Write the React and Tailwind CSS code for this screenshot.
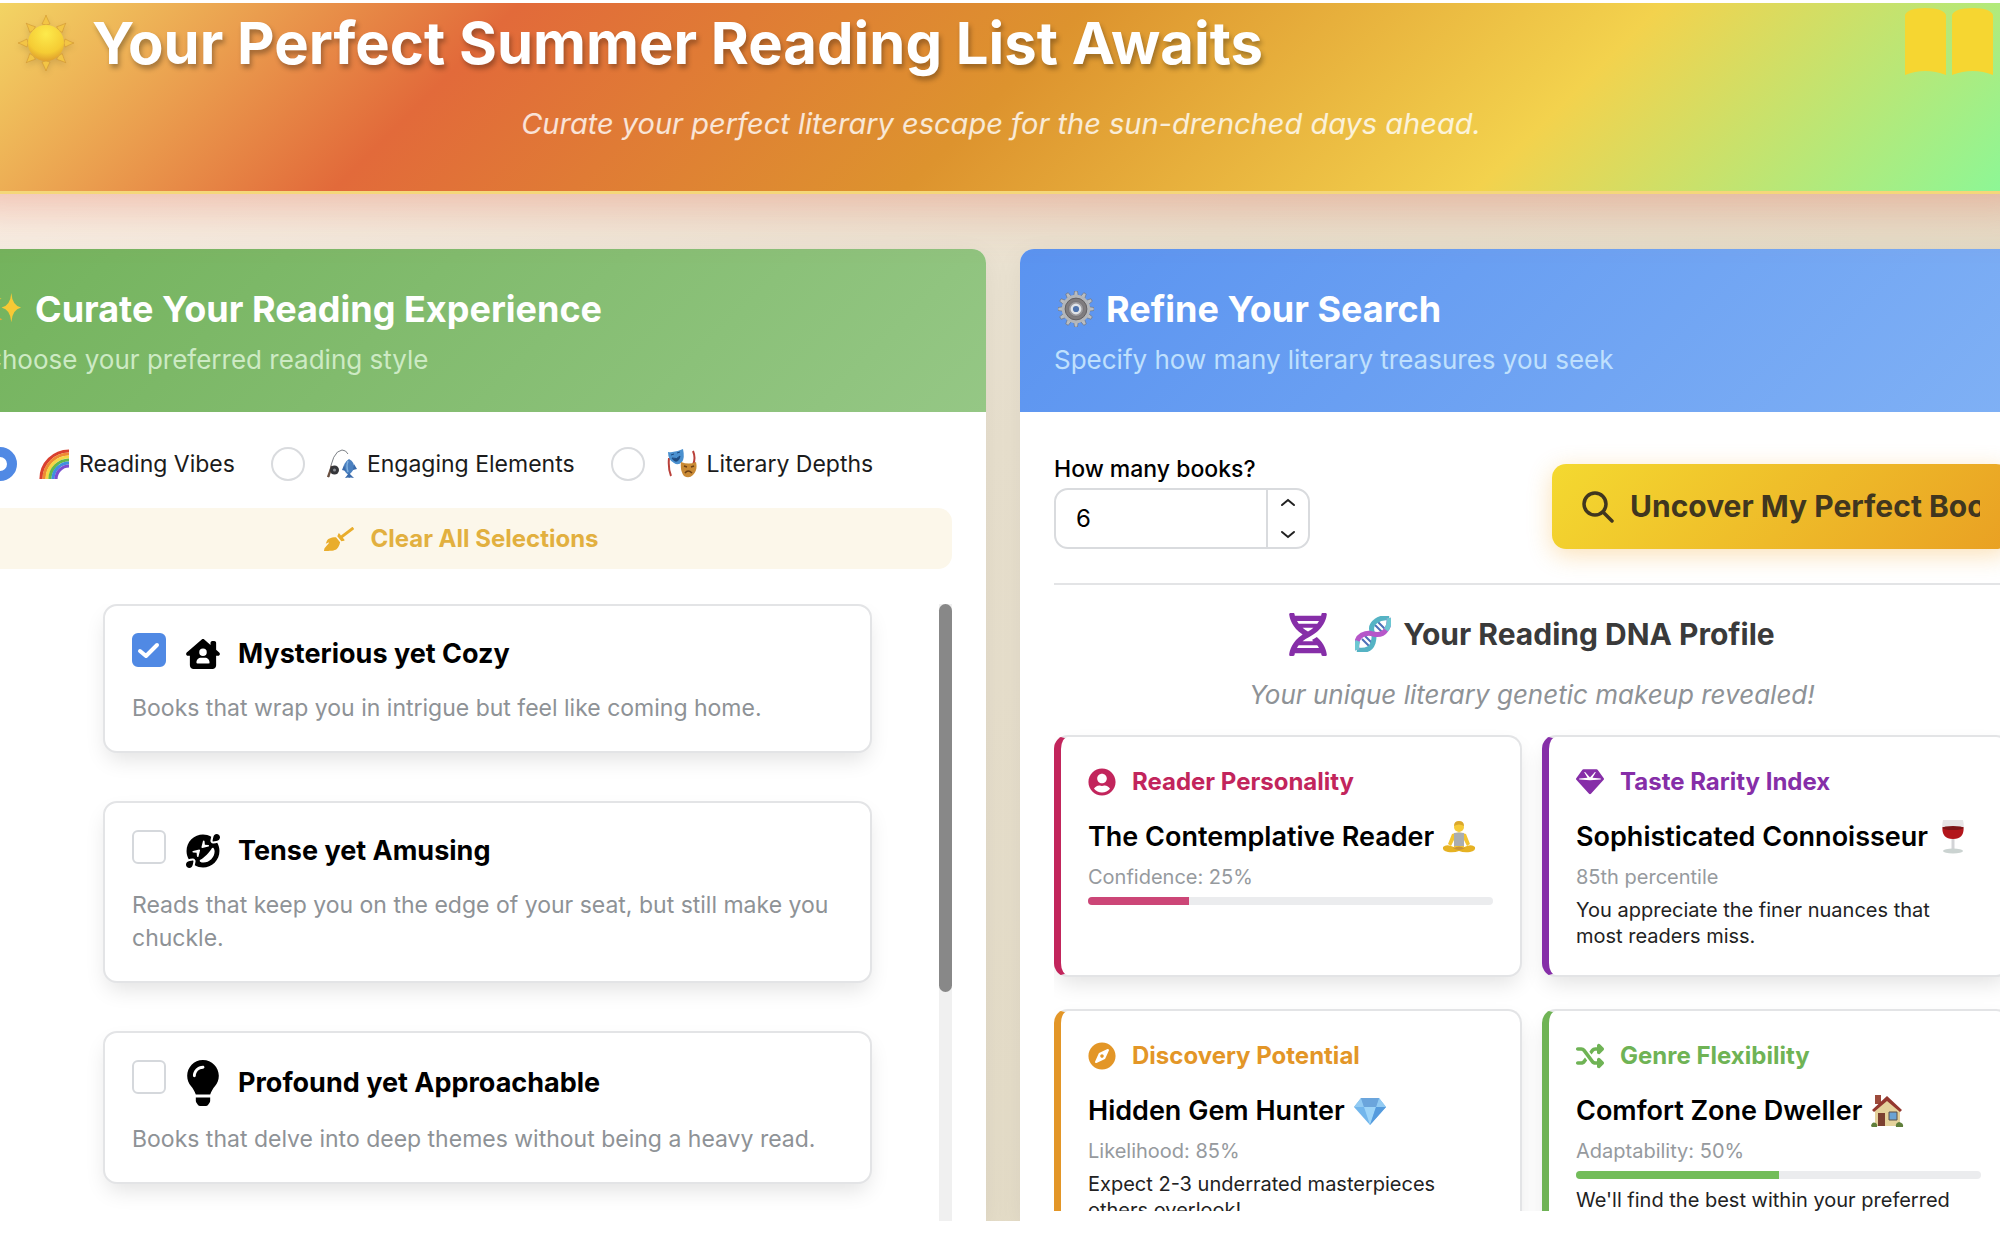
import React, { useState } from "react";
import {
  FaBroom,
  FaCompass,
  FaDna,
  FaGrinSquintTears,
  FaLightbulb,
  FaUserCircle,
} from "react-icons/fa";
import { FaGem, FaHouseChimneyUser, FaShuffle } from "react-icons/fa6";

function SunIcon() {
  const rays = [0, 45, 90, 135, 180, 225, 270, 315];
  return (
    <svg viewBox="0 0 56 56" className="h-14 w-14 shrink-0 drop-shadow-md" aria-hidden="true">
      <defs>
        <radialGradient id="sunFill" cx="50%" cy="25%" r="75%">
          <stop offset="0" stopColor="#fdea4c" />
          <stop offset="0.7" stopColor="#f5cc34" />
          <stop offset="1" stopColor="#e0a02c" />
        </radialGradient>
      </defs>
      {rays.map((deg) => (
        <path key={deg} d="M28 0c1 3 2 5 4 9q-4 2-8 0c2-4 3-6 4-9z" fill="#f3c545" stroke="#c98a2b" strokeWidth="0.5" transform={`rotate(${deg} 28 28)`} />
      ))}
      <circle cx="28" cy="28" r="18" fill="url(#sunFill)" />
    </svg>
  );
}

function BookIcon() {
  return (
    <svg viewBox="0 0 88 68" className="h-[68px] w-[88px]" fill="#f6d631" aria-hidden="true">
      <path d="M0 8Q3 1 20 1Q38 1 41 8V68Q20 60 0 68z" />
      <path d="M47 8Q50 1 68 1Q85 1 88 8V68Q68 60 47 68z" />
    </svg>
  );
}

function SparklesIcon() {
  return (
    <svg viewBox="0 0 37 37" className="h-9 w-9 shrink-0" fill="#f7c935" aria-hidden="true">
      <path d="M25 2q1 13 10 15q-9 2-10 15q-1-13-10-15q9-2 10-15z" />
      <path d="M9 1q1 6 6 7q-5 1-6 7q-1-6-6-7q5-1 6-7z" />
      <path d="M10 22q1 6 6 7q-5 1-6 7q-1-6-6-7q5-1 6-7z" fill="#eda937" />
    </svg>
  );
}

function GearIcon() {
  const teeth = [0, 30, 60, 90, 120, 150, 180, 210, 240, 270, 300, 330];
  return (
    <svg viewBox="0 0 38 38" className="h-9 w-9 shrink-0" aria-hidden="true">
      {teeth.map((deg) => (
        <path key={deg} d="M16.500 6l1-6h3l1 6z" fill="#b9bdc2" stroke="#6d6f75" strokeWidth="0.6" transform={`rotate(${deg} 19 19)`} />
      ))}
      <circle cx="19" cy="19" r="15" fill="#b3b6ba" />
      <circle cx="19" cy="19" r="11.500" fill="#7f7c7e" stroke="#5f5d60" />
      <circle cx="19" cy="19" r="8" fill="#9b999c" stroke="#77757a" />
      <circle cx="19" cy="19" r="4.500" fill="#4f74ad" stroke="#dfe3e8" strokeWidth="2.500" />
    </svg>
  );
}

function RainbowIcon() {
  const bands = [
    [28, "#d9402f"],
    [25, "#ee8b33"],
    [22, "#f5d645"],
    [19, "#62b84b"],
    [16, "#3f8fe0"],
    [13, "#7a4fd0"],
  ];
  return (
    <svg viewBox="0 0 30 30" className="h-[30px] w-[30px] shrink-0" fill="none" aria-hidden="true">
      {bands.map(([r, color]) => (
        <path key={r} d={`M${30 - r} 30A${r} ${r} 0 0 1 30 ${30 - r}`} stroke={color} strokeWidth="3.200" />
      ))}
    </svg>
  );
}

function FishingIcon() {
  return (
    <svg viewBox="0 0 30 30" className="h-[30px] w-[30px] shrink-0" fill="none" aria-hidden="true">
      <path d="M2 28Q5 2 15 1Q19 1 21 5" stroke="#7b7f85" strokeWidth="1" />
      <path d="M1 28L5 17" stroke="#6a5040" strokeWidth="2.200" />
      <circle cx="7.500" cy="21" r="4.500" fill="#35363a" />
      <circle cx="7.500" cy="21" r="1.500" fill="#8b8e94" />
      <path d="M22 10q6 3 5 10q-2 3-5 6q-4-2-5-6q-1-6 5-10z" fill="#4a80c0" />
      <path d="M17 16l-2 5l4 1zM27 15l3 5l-4 1zM22 24l-4 5q4-1 4 0q1-1 5 0z" fill="#3a6aaa" />
      <path d="M21 12q-2 5 0 11" stroke="#80b0e0" strokeWidth="1.500" />
    </svg>
  );
}

function MasksIcon() {
  return (
    <svg viewBox="0 0 30 30" className="h-[30px] w-[30px] shrink-0" fill="none" aria-hidden="true">
      <path d="M2 9Q1 20 4 27M26 2q3 7 0 14" stroke="#b9403a" strokeWidth="2" />
      <path d="M1 3q7 1 15-3q2 9-1 13q-4 4-8 1Q1 11 1 3z" fill="#4a90cf" />
      <path d="M4 6l3-1M10 4l3-1M5 9q5 2 8-2q-1 6-5 5q-2-1-3-3z" stroke="#1e4a80" fill="#1e4a80" />
      <path d="M14 13q8 3 15 0q2 8-3 13q-4 4-9 1q-4-5-3-14z" fill="#c98a35" />
      <path d="M17 17l3 1M24 18l3-1M18 24q3-4 7 0" stroke="#6b3f14" strokeWidth="1.500" />
    </svg>
  );
}

// two crossing strands, drawn as twisted ribbons with rungs in the loops
function HelixIcon() {
  return (
    <svg viewBox="0 0 36 36" className="h-9 w-9 shrink-0" fill="none" aria-hidden="true">
      <path d="M7 23l7 7M10 20l7 7M20 9l7 7M23 6l7 7" stroke="#4d70b8" strokeWidth="2" />
      <path d="M2 34Q15 36 18 27Q20 20 18 18Q14 10 21 5Q26 1 34 2" stroke="#55b3c4" strokeWidth="5" />
      <path d="M2 34Q0 23 7 19Q13 16 18 18Q27 20 31 14Q35 9 34 2" stroke="#b657c9" strokeWidth="5" />
      <path d="M34 2Q35 9 31 14M2 34Q1 29 3 25" stroke="#6cc7d2" strokeWidth="5" />
    </svg>
  );
}

function MeditateIcon() {
  return (
    <svg viewBox="0 0 34 32" className="h-8 w-[34px] shrink-0" aria-hidden="true">
      <path d="M10 13q7-3 14 0l4 10l-3 2l-3-6v7H12v-7l-3 6l-3-2z" fill="#f3c431" />
      <path d="M12 12q5-1 10 0v13H12z" fill="#a9adb1" />
      <path d="M1 26q3-3 8-1q4 2 8 2q4 0 8-2q5-2 8 1q1 4-5 5q-6 1-11-1q-5 2-11 1q-6-1-5-5z" fill="#e6b223" />
      <path d="M11 27q6-3 12 0q-6 4-12 0z" fill="#c8953a" />
      <circle cx="17" cy="6" r="5" fill="#f6cb38" />
      <path d="M12 5q0-5 5-5t5 5q-5-3-10 0z" fill="#dba82b" />
    </svg>
  );
}

function WineIcon() {
  return (
    <svg viewBox="0 0 34 34" className="h-[34px] w-[34px] shrink-0" aria-hidden="true">
      <path d="M7 0h20q2 8-1 14q-3 5-9 5t-9-5Q5 8 7 0z" fill="#e7e5e6" />
      <path d="M6.500 7h21q1 12-10.500 12T6.500 7z" fill="#b3161c" />
      <ellipse cx="17" cy="8" rx="10.500" ry="2" fill="#7d1517" />
      <path d="M15.500 19h3v11h-3z" fill="#d3d4d7" />
      <ellipse cx="17" cy="31" rx="10" ry="2.500" fill="#cbd3d1" />
    </svg>
  );
}

function DiamondIcon() {
  return (
    <svg viewBox="0 0 34 28" className="h-7 w-[34px] shrink-0" aria-hidden="true">
      <path d="M8 1h18l7 9l-16 18L1 10z" fill="#72b6ec" />
      <path d="M8 1l3 9H1zM26 1l-3 9h10z" fill="#92cbf3" />
      <path d="M8 1h18l-3 9H11z" fill="#6ba5dc" />
      <path d="M11 10h12l-6 18z" fill="#9cd4f8" />
      <path d="M23 10h10L17 28z" fill="#559bdd" />
    </svg>
  );
}

function HouseIcon() {
  return (
    <svg viewBox="0 0 34 33" className="h-[33px] w-[34px] shrink-0" aria-hidden="true">
      <path d="M5 0h6v9H5z" fill="#9c4a3b" />
      <path d="M5 14L18 4l12 10v17H5z" fill="#e5d29c" />
      <path d="M2 15L17 1l15 14l-2 2L17 6L4 17z" fill="#94382f" />
      <path d="M8 18h7v13H8z" fill="#7c4030" />
      <path d="M19 17h8v8h-8z" fill="#6aa3d4" stroke="#5c5148" />
      <path d="M1 31q1-5 5-3q2 2 1 4H2zM26 32q-1-4 3-5q5 1 4 5z" fill="#5f7f3b" />
    </svg>
  );
}

function SearchIcon() {
  return (
    <svg viewBox="0 0 32 32" className="h-8 w-8 shrink-0" fill="none" stroke="#40361f" strokeWidth="3.500" strokeLinecap="round" aria-hidden="true">
      <circle cx="13" cy="13" r="11" />
      <path d="M21 21l9 9" />
    </svg>
  );
}

function Chevron({ up }) {
  return (
    <svg viewBox="0 0 16 9" className="h-[9px] w-4" fill="none" stroke="#222" strokeWidth="2" strokeLinecap="round" aria-hidden="true">
      <path d={up ? "M2 7l6-5l6 5" : "M2 2l6 5l6-5"} />
    </svg>
  );
}

const categories = [
  { id: "vibes", label: "Reading Vibes", icon: <RainbowIcon /> },
  { id: "elements", label: "Engaging Elements", icon: <FishingIcon /> },
  { id: "depths", label: "Literary Depths", icon: <MasksIcon /> },
];

const vibes = [
  {
    id: "cozy",
    title: "Mysterious yet Cozy",
    text: "Books that wrap you in intrigue but feel like coming home.",
    icon: <FaHouseChimneyUser className="h-[30px] w-[34px]" />,
  },
  {
    id: "tense",
    title: "Tense yet Amusing",
    text: "Reads that keep you on the edge of your seat, but still make you chuckle.",
    icon: <FaGrinSquintTears className="h-[34px] w-[34px]" />,
  },
  {
    id: "profound",
    title: "Profound yet Approachable",
    text: "Books that delve into deep themes without being a heavy read.",
    icon: <FaLightbulb className="h-[46px] w-[34px]" />,
  },
];

const traits = [
  {
    label: "Reader Personality",
    icon: <FaUserCircle />,
    color: "text-[#c2255c]",
    border: "border-l-[#c2255c]",
    name: "The Contemplative Reader",
    emoji: <MeditateIcon />,
    stat: "Confidence: 25%",
    bar: 25,
    fill: "bg-[#cc4677]",
  },
  {
    label: "Taste Rarity Index",
    icon: <FaGem />,
    color: "text-[#862ea8]",
    border: "border-l-[#862ea8]",
    name: "Sophisticated Connoisseur",
    emoji: <WineIcon />,
    stat: "85th percentile",
    text: "You appreciate the finer nuances that most readers miss.",
  },
  {
    label: "Discovery Potential",
    icon: <FaCompass />,
    color: "text-[#e39627]",
    border: "border-l-[#e39627]",
    name: "Hidden Gem Hunter",
    emoji: <DiamondIcon />,
    stat: "Likelihood: 85%",
    text: "Expect 2-3 underrated masterpieces others overlook!",
  },
  {
    label: "Genre Flexibility",
    icon: <FaShuffle />,
    color: "text-[#6fb355]",
    border: "border-l-[#6fb355]",
    name: "Comfort Zone Dweller",
    emoji: <HouseIcon />,
    stat: "Adaptability: 50%",
    bar: 50,
    fill: "bg-[#73bd5a]",
    text: "We'll find the best within your preferred genres.",
  },
];

function VibeCard({ vibe, checked, onToggle }) {
  return (
    <div className="rounded-[14px] border-2 border-[#e3e4e6] bg-white px-[27px] pt-[27px] pb-[26px] shadow-[0_10px_22px_-4px_rgba(0,0,0,0.12)]">
      <label htmlFor={vibe.id} className="flex cursor-pointer items-start">
        <span className="grid shrink-0">
          <input
            id={vibe.id}
            type="checkbox"
            checked={checked}
            onChange={onToggle}
            className="col-start-1 row-start-1 h-[34px] w-[34px] appearance-none rounded-md border-2 border-[#d5d8dc] bg-white checked:border-[#5089e4] checked:bg-[#5089e4]"
          />
          {checked && (
            <svg viewBox="0 0 34 34" className="pointer-events-none col-start-1 row-start-1 h-[34px] w-[34px]" fill="none" stroke="white" strokeWidth="4" strokeLinecap="round" strokeLinejoin="round">
              <path d="M8 18l6 5l11-11" />
            </svg>
          )}
        </span>
        <span className="ml-5 flex min-h-[42px] items-center gap-[18px] text-black">
          {vibe.icon}
          <span className="text-[27px] leading-[42px] font-bold">{vibe.title}</span>
        </span>
      </label>
      <p className="mt-[17px] text-[23px] leading-[33px] text-[#8e9296]">{vibe.text}</p>
    </div>
  );
}

function TraitCard({ trait }) {
  return (
    <div className={`rounded-[14px] border-2 border-l-[7px] border-[#e3e4e6] bg-white px-[27px] pt-[27px] pb-[26px] shadow-[0_10px_22px_-4px_rgba(0,0,0,0.12)] ${trait.border}`}>
      <h4 className={`flex items-center gap-4 text-2xl leading-9 font-bold ${trait.color}`}>
        <span className="text-[28px]">{trait.icon}</span>
        {trait.label}
      </h4>
      <p className="mt-[17px] flex items-center gap-2 text-[27px] leading-10 font-semibold text-black">
        {trait.name} {trait.emoji}
      </p>
      <p className="mt-1 text-xl leading-8 text-[#969a9e]">{trait.stat}</p>
      {trait.bar && (
        <div className="mt-1 mb-2 h-2 overflow-hidden rounded-full bg-[#ebecee]">
          <div className={`h-full ${trait.fill}`} style={{ width: `${trait.bar}%` }}></div>
        </div>
      )}
      {trait.text && <p className="mt-1 text-xl leading-[26px] text-[#222]">{trait.text}</p>}
    </div>
  );
}

export default function App() {
  const [category, setCategory] = useState("vibes");
  const [selected, setSelected] = useState(["cozy"]);
  const [count, setCount] = useState(6);

  const toggleVibe = (id) => {
    setSelected((prev) => (prev.includes(id) ? prev.filter((v) => v !== id) : [...prev, id]));
  };

  return (
    <div className="h-screen overflow-hidden bg-white pt-[3px] pb-[15px] font-[Inter,sans-serif]">
      <div className="-ml-[51px] flex h-full w-[calc(100%+95px)] flex-col overflow-hidden bg-[linear-gradient(135deg,#fbf3ea_0%,#e8e0ce_45%,#e0d8c0_100%)]">
        <header className="relative shrink-0 border-b-[3px] border-[#f5d77a] bg-[linear-gradient(135deg,#f3d564_2%,#e26a3a_25%,#dd932e_50%,#f3d24d_75%,#84fa9c_100%)] bg-origin-border pr-[60px] pb-[43px] pl-[69px] shadow-[0_8px_50px_rgba(231,111,81,0.45)]">
          <h1 className="flex items-center gap-[18px] text-[58px] leading-[80px] font-bold whitespace-nowrap text-white [text-shadow:2px_4px_5px_rgba(0,0,0,0.3)]">
            <SunIcon />
            Your Perfect Summer Reading List Awaits
          </h1>
          <p className="pt-[17px] text-center text-[29px] leading-[48px] text-white/80 italic">
            Curate your perfect literary escape for the sun-drenched days ahead.
          </p>
          <div className="absolute top-1 right-[51px]">
            <BookIcon />
          </div>
        </header>

        <main className="mt-[55px] grid min-h-0 flex-1 grid-cols-[1037fr_1024fr] gap-[34px]">
          <section className="flex min-h-0 flex-col rounded-t-[14px] bg-white shadow-[0_8px_30px_rgba(0,0,0,0.06)]">
            <div className="rounded-t-[14px] bg-[linear-gradient(135deg,#72b25b,#95c785)] px-[34px] pt-[35px] pb-8">
              <h2 className="flex items-center gap-3 pl-1 text-4xl leading-[50px] font-bold text-white">
                <SparklesIcon />
                Curate Your Reading Experience
              </h2>
              <p className="mt-[6px] text-[26px] leading-10 text-[#cdeac4]">Choose your preferred reading style</p>
            </div>
            <div className="flex min-h-0 flex-1 flex-col px-[34px] pt-[34px]">
              <div className="flex gap-9">
                {categories.map((item) => (
                  <label key={item.id} htmlFor={item.id} className="flex cursor-pointer items-center text-[23px] leading-9 text-[#1b1b1b]">
                    <input
                      id={item.id}
                      type="radio"
                      name="category"
                      checked={category === item.id}
                      onChange={() => setCategory(item.id)}
                      className="mr-[22px] h-[34px] w-[34px] appearance-none rounded-full border-2 border-[#d9dbde] bg-white checked:border-[10px] checked:border-[#5089e4]"
                    />
                    {item.icon}
                    <span className="ml-[10px]">{item.label}</span>
                  </label>
                ))}
              </div>
              <button
                type="button"
                onClick={() => setSelected([])}
                className="mt-[26px] flex h-[61px] shrink-0 items-center justify-center gap-4 rounded-[14px] bg-[#fcf7ea] pr-3 text-2xl font-bold text-[#e2b03f]"
              >
                <FaBroom className="h-7 w-[30px] text-[#e9ad2c]" />
                Clear All Selections
              </button>
              <div className="mt-[35px] flex min-h-0 flex-1 overflow-hidden">
                <div className="flex flex-1 flex-col gap-12 pr-[67px] pl-[120px]">
                  {vibes.map((vibe) => (
                    <VibeCard key={vibe.id} vibe={vibe} checked={selected.includes(vibe.id)} onToggle={() => toggleVibe(vibe.id)} />
                  ))}
                </div>
                <div className="w-[13px] bg-[#f0f0f0]">
                  <div className="h-[388px] rounded-full bg-[#888]"></div>
                </div>
              </div>
            </div>
          </section>

          <section className="flex min-h-0 flex-col rounded-t-[14px] bg-white shadow-[0_8px_30px_rgba(0,0,0,0.06)]">
            <div className="rounded-t-[14px] bg-[linear-gradient(135deg,#5a93f0,#80b1f5)] px-[34px] pt-[35px] pb-8">
              <h2 className="flex items-center gap-3 pl-1 text-4xl leading-[50px] font-bold text-white">
                <GearIcon />
                Refine Your Search
              </h2>
              <p className="mt-[6px] text-[26px] leading-10 text-[#bfe0fd]">Specify how many literary treasures you seek</p>
            </div>
            <div className="flex min-h-0 flex-1 flex-col px-[34px] pt-[38px] pb-[10px]">
              <div className="flex items-end justify-between">
                <div>
                  <label htmlFor="count" className="block text-[23px] leading-[38px] font-medium text-black">
                    How many books?
                  </label>
                  <div className="flex h-[61px] w-64 overflow-hidden rounded-[14px] border-2 border-[#d9dbde] bg-white">
                    <input
                      id="count"
                      type="text"
                      inputMode="numeric"
                      value={count}
                      onChange={(e) => setCount(Number(e.target.value) || 0)}
                      className="min-w-0 flex-1 pl-5 text-2xl text-black outline-none"
                    />
                    <div className="flex w-[42px] flex-col border-l-2 border-[#d9dbde]">
                      <button type="button" aria-label="More books" onClick={() => setCount(count + 1)} className="flex flex-1 items-start justify-center pt-2">
                        <Chevron up />
                      </button>
                      <button type="button" aria-label="Fewer books" onClick={() => setCount(Math.max(1, count - 1))} className="flex flex-1 items-end justify-center pb-2">
                        <Chevron />
                      </button>
                    </div>
                  </div>
                </div>
                <button
                  type="button"
                  className="flex h-[85px] w-[458px] items-center gap-4 rounded-[14px] bg-[linear-gradient(135deg,#f4d930,#e9a023)] px-[30px] text-[30px] font-bold text-[#40361f] shadow-[0_6px_24px_rgba(243,156,18,0.3)]"
                >
                  <SearchIcon />
                  <span className="overflow-hidden whitespace-nowrap">Uncover My Perfect Books</span>
                </button>
              </div>

              <div className="mt-[34px] min-h-0 flex-1 overflow-hidden border-t-2 border-[#e3e4e6]">
                <h3 className="mt-6 flex items-center justify-center text-[30px] leading-[50px] font-bold text-[#3a3a3a]">
                  <FaDna className="mr-7 h-[43px] w-[38px] text-[#862ea8]" />
                  <HelixIcon />
                  <span className="ml-3">Your Reading DNA Profile</span>
                </h3>
                <p className="mt-4 text-center text-[26px] leading-10 text-[#8e9296] italic">Your unique literary genetic makeup revealed!</p>
                <div className="mt-5 grid grid-cols-2 gap-x-5 gap-y-8">
                  {traits.map((trait) => (
                    <TraitCard key={trait.label} trait={trait} />
                  ))}
                </div>
              </div>
            </div>
          </section>
        </main>
      </div>
    </div>
  );
}
